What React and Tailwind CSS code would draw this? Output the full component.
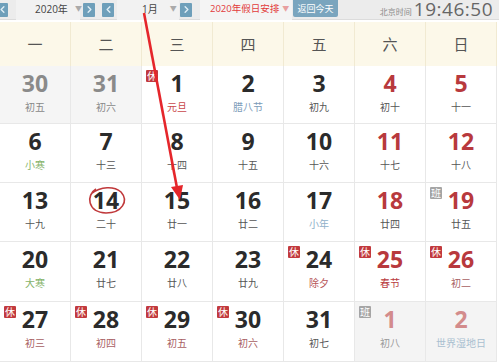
import { ChevronLeft, ChevronRight } from "lucide-react";

const weekdays = ["一", "二", "三", "四", "五", "六", "日"];

// n: number, l: lunar, nc: number colour, lc: lunar colour, b: badge, muted: other month
const rows = [
  [
    { n: 30, l: "初五", muted: true },
    { n: 31, l: "初六", muted: true },
    { n: 1, l: "元旦", b: "休", lc: "text-[#c9474a]" },
    { n: 2, l: "腊八节", lc: "text-[#7b9bb8]" },
    { n: 3, l: "初九" },
    { n: 4, l: "初十", nc: "text-[#b8393d]" },
    { n: 5, l: "十一", nc: "text-[#b8393d]" },
  ],
  [
    { n: 6, l: "小寒", lc: "text-[#86b36a]" },
    { n: 7, l: "十三" },
    { n: 8, l: "十四" },
    { n: 9, l: "十五" },
    { n: 10, l: "十六" },
    { n: 11, l: "十七", nc: "text-[#b8393d]" },
    { n: 12, l: "十八", nc: "text-[#b8393d]" },
  ],
  [
    { n: 13, l: "十九" },
    { n: 14, l: "二十" },
    { n: 15, l: "廿一" },
    { n: 16, l: "廿二" },
    { n: 17, l: "小年", lc: "text-[#8fb0c9]" },
    { n: 18, l: "廿四", nc: "text-[#b8393d]" },
    { n: 19, l: "廿五", nc: "text-[#b8393d]", b: "班" },
  ],
  [
    { n: 20, l: "大寒", lc: "text-[#86b36a]" },
    { n: 21, l: "廿七" },
    { n: 22, l: "廿八" },
    { n: 23, l: "廿九" },
    { n: 24, l: "除夕", b: "休", lc: "text-[#b65457]" },
    { n: 25, l: "春节", b: "休", nc: "text-[#b8393d]", lc: "text-[#b8393d]" },
    { n: 26, l: "初二", b: "休", nc: "text-[#b8393d]", lc: "text-[#a86062]" },
  ],
  [
    { n: 27, l: "初三", b: "休", lc: "text-[#a86062]" },
    { n: 28, l: "初四", b: "休", lc: "text-[#a86062]" },
    { n: 29, l: "初五", b: "休", lc: "text-[#a86062]" },
    { n: 30, l: "初六", b: "休", lc: "text-[#a86062]" },
    { n: 31, l: "初七" },
    { n: 1, l: "初八", b: "班", next: true },
    { n: 2, l: "世界湿地日", next: true, lc: "text-[#a9bfd0]" },
  ],
];

const rowHeights = ["h-[58px]", "h-[59px]", "h-[59px]", "h-[60px]", "h-[60px]"];

function NavBtn({ dir }) {
  const Icon = dir === "left" ? ChevronLeft : ChevronRight;
  return (
    <div className="shrink-0 w-[12px] h-[14px] bg-[#6e9fba] rounded-[1px] flex items-center justify-center">
      <Icon size={11} strokeWidth={3} className="text-[#dfeef6]" />
    </div>
  );
}

function Caret({ red }) {
  return <span className={`text-[7px] ${red ? "text-[#e8a0a0]" : "text-[#aaa]"}`}>▼</span>;
}

function Cell({ d }) {
  let bg = "bg-white";
  let nc = d.nc || "text-[#2b2b2b]";
  let lc = d.lc || "text-[#555]";
  if (d.muted) {
    bg = "bg-[#f5f5f5]";
    nc = "text-[#8a8a8a]";
    lc = "text-[#888]";
  }
  if (d.next) {
    bg = "bg-[#f4f4f4]";
    nc = "text-[#d38c8c]";
    lc = d.lc || "text-[#999]";
  }
  return (
    <div className={`relative flex flex-col items-center border-r border-b border-[#e8e8e8] ${bg}`}>
      {d.b && (
        <span
          className={`absolute left-[4px] top-[4px] w-[12px] h-[12px] flex items-center justify-center text-[10px] leading-none text-white rounded-[1px] ${
            d.b === "休" ? "bg-[#c23a3e]" : "bg-[#a5a5a5]"
          }`}
        >
          {d.b}
        </span>
      )}
      <span className={`pt-[4px] text-[23px] leading-[26px] font-bold ${nc}`}>{d.n}</span>
      <span className={`mt-[4px] text-[10px] leading-[14px] whitespace-nowrap ${lc}`}>{d.l}</span>
    </div>
  );
}

export default function App() {
  return (
    <div
      className="relative w-[499px] h-[362px] overflow-hidden bg-white"
      style={{ fontFamily: '"Open Sans", "Noto Sans CJK SC", sans-serif' }}
    >
      {/* Toolbar */}
      <div className="h-[20px] flex items-center whitespace-nowrap bg-[#ececec] border-b border-[#dcdcdc] text-[10px] text-[#444]">
        <div className="shrink-0 -ml-[4px]">
          <NavBtn dir="left" />
        </div>
        <div className="shrink-0 ml-[8px] w-[64px] h-[20px] bg-[#f2f2f2] flex items-center pl-[19px] gap-[7px]">
          <span>2020年</span>
          <Caret />
        </div>
        <div className="shrink-0 ml-[3px]">
          <NavBtn dir="right" />
        </div>
        <div className="shrink-0 ml-[7px]">
          <NavBtn dir="left" />
        </div>
        <div className="shrink-0 ml-[3px] w-[62px] h-[20px] bg-[#f2f2f2] flex items-center pl-[25px] gap-[12px]">
          <span>1月</span>
          <Caret />
        </div>
        <div className="shrink-0 ml-[1px]">
          <NavBtn dir="right" />
        </div>
        <div className="shrink-0 ml-[8px] w-[92px] h-[20px] bg-[#f4f4f4] flex items-center pl-[10px] gap-[3px] text-[9.5px] text-[#e23b3b]">
          <span>2020年假日安排</span>
          <Caret red />
        </div>
        <div className="shrink-0 ml-[1px] w-[45px] h-[17px] self-start bg-[#7aa5be] text-white text-[9px] flex items-center justify-center rounded-b-[2px]">
          返回今天
        </div>
        <div className="shrink-0 ml-auto h-[20px] flex items-center gap-[2px] pr-[6px]">
          <span className="text-[8px] text-[#8a8a8a] pt-[4px]">北京时间</span>
          <span className="text-[19px] leading-[19px] tracking-[0.5px] text-[#666]">19:46:50</span>
        </div>
      </div>

      {/* Weekday header */}
      <div className="mt-[2px] grid grid-cols-7 w-[497px] h-[44px] bg-[#fcf8e9]">
        {weekdays.map((w) => (
          <div
            key={w}
            className="flex items-center justify-center border-r border-[#f1ead2] text-[15px] text-[#555]"
          >
            {w}
          </div>
        ))}
      </div>

      {/* Days */}
      {rows.map((row, i) => (
        <div key={i} className={`grid grid-cols-7 w-[497px] ${rowHeights[i]}`}>
          {row.map((d, j) => (
            <Cell key={j} d={d} />
          ))}
        </div>
      ))}

      {/* annotations */}
      <svg className="absolute inset-0 pointer-events-none" width="499" height="362">
        <line x1="144" y1="13" x2="177" y2="188" stroke="#e5262b" strokeWidth="2.6" />
        <polygon points="171,187 183,185 180,200" fill="#e5262b" />
        <path
          d="M96 189 C 86 195, 87 212, 106 213 C 122 213, 129 201, 121 192 C 114 186, 101 186, 91 194"
          fill="none"
          stroke="#c0393b"
          strokeWidth="1.6"
        />
      </svg>
    </div>
  );
}
